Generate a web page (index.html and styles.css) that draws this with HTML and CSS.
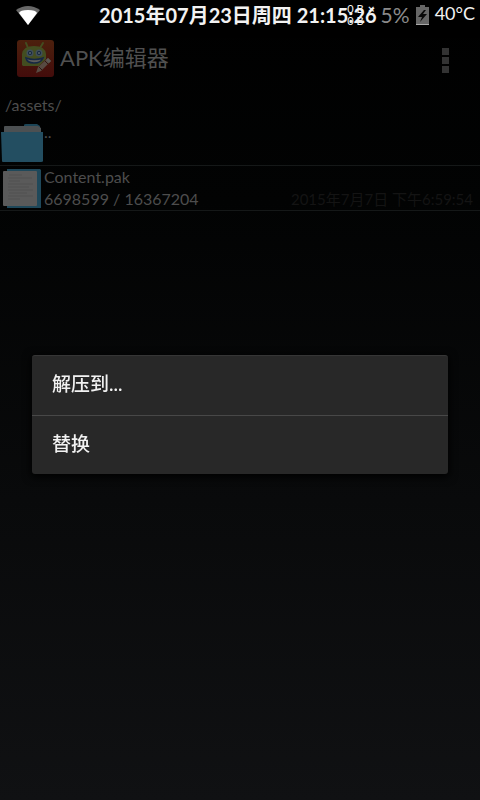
FILE: index.html
```
<!DOCTYPE html>
<html lang="zh-CN">
<head>
<meta charset="utf-8">
<meta name="viewport" content="width=device-width, initial-scale=1">
<title>APK编辑器</title>
<link rel="stylesheet" href="styles.css">
</head>
<body>
<header class="status">
  <svg class="wifi" viewBox="0 0 24 19" width="24" height="19" aria-hidden="true">
    <path d="M0 4Q12 -4 24 4L12 19Z" fill="#686868"/>
    <path d="M3 7Q4 4 12 4T21 7L12 19Z" fill="#fff"/>
  </svg>
  <time class="clock">2015年07月23日周四 21:15:26<span class="speed"><span>0 B</span><span>0 B</span></span><span class="mark">×</span></time>
  <span class="percent">5%</span>
  <svg class="battery" viewBox="0 0 13 20" width="13" height="20" aria-hidden="true">
    <path d="M4 0H9V2H13V20H0V2H4Z" fill="#666"/>
    <path d="M0 19H13V20H0Z" fill="#aaa"/>
    <path d="M8 5L2 12H6L4 17L11 9H7L10 5Z" fill="#080808"/>
  </svg>
  <span class="temp">40°C</span>
</header>
<main class="app">
  <div class="bar">
    <svg class="logo" viewBox="0 0 38 38" width="38" height="38" aria-hidden="true">
      <defs><linearGradient id="g" x1="0" y1="0" x2="0" y2="1"><stop offset="0" stop-color="#4c200d"/><stop offset="1" stop-color="#430c0b"/></linearGradient></defs>
      <rect x="1" y="1" width="37" height="37" rx="3" fill="url(#g)"/>
      <path d="M10 4L12 9M27 4L24 9" stroke="#434d20" stroke-width="2" stroke-linecap="round"/>
      <path d="M6 26V15Q7 7 18 7T30 15V20L23 27H7Z" fill="#434d20"/>
      <circle cx="14" cy="14" r="3.5" fill="#3f4d58"/><circle cx="23" cy="14" r="3.5" fill="#3f4d58"/>
      <circle cx="14" cy="14" r="2" fill="#12243d"/><circle cx="23" cy="14" r="2" fill="#12243d"/>
      <circle cx="14" cy="14" r="1" fill="#5c6468"/><circle cx="23" cy="14" r="1" fill="#5c6468"/>
      <path d="M10 19Q18 22 27 19Q25 24 18 24T10 19Z" fill="#5c5c5c" stroke="#152744" stroke-width="1.5"/>
      <path d="M20 34L22 28L32 19L35 22L25 32Z" fill="#574a42"/>
      <path d="M29 22L32 25M23 28L26 31" stroke="#2d1713"/>
      <path d="M32 19L35 22L33 24L30 21Z" fill="#5c5855"/>
    </svg>
    <h1 class="title">APK编辑器</h1>
    <button class="more" aria-label="更多选项"><svg viewBox="0 0 7 25" width="7" height="25" aria-hidden="true"><path d="M0 0H7V7H0ZM0 9H7V16H0ZM0 18H7V25H0Z" fill="#333"/></svg></button>
  </div>
  <p class="path">/assets/</p>
  <ul class="files">
    <li class="file">
      <svg class="icon" viewBox="0 0 44 44" width="44" height="44" aria-hidden="true">
        <path d="M24 4Q24 3 26 3H37L40 5V20H24Z" fill="#1c4557"/>
        <path d="M4 6Q4 5 5 5H38L41 7V14H4Z" fill="#4c5052"/>
        <path d="M1 11H43V40Q43 41 41 41H3Q2 41 2 40Z" fill="#234e61"/>
      </svg>
      <div class="info"><span>..</span></div>
    </li>
    <li class="file">
      <svg class="icon" viewBox="0 0 44 44" width="44" height="44" aria-hidden="true">
        <path d="M7 3H40L41 4V42H7Z" fill="#1f485a"/>
        <rect x="3" y="5" width="34" height="35" rx="1" fill="#5a5a5a"/>
        <path d="M9 9H22M8 12H32M9 15H20M8 18H33M8 21H29M8 24H33M9 27H27M8 30H33M8 33H20" stroke="#505050"/>
      </svg>
      <div class="info">
        <span>Content.pak</span>
        <div class="meta"><span>6698599 / 16367204</span><time class="date">2015年7月7日 下午6:59:54</time></div>
      </div>
    </li>
  </ul>
</main>
<div class="overlay">
  <div class="menu" role="dialog" aria-label="文件操作">
    <button class="item">解压到...</button>
    <button class="item">替换</button>
  </div>
</div>
</body>
</html>
```
FILE: styles.css
```
* { box-sizing: border-box; }
body {
  margin: 0;
  min-height: 100vh;
  background: linear-gradient(#000, #020303 25%, #101113);
  color: #4d4d4d;
  font-family: Lato, "Noto Sans CJK SC", sans-serif;
  font-size: 16px;
  line-height: 22px;
}
svg { display: block; flex: none; }
button { border: 0; background: none; color: inherit; font: inherit; }
.status {
  display: flex;
  align-items: flex-start;
  height: 38px;
  padding: 3px 5px 0 16px;
  background: #000;
  white-space: nowrap;
}
.wifi { margin-top: 3px; }
.clock {
  position: relative;
  margin-left: auto;
  color: #f2f2f2;
  font-size: 20px;
  font-weight: 700;
  line-height: 24px;
}
.speed {
  position: absolute;
  top: 0;
  right: 13px;
  font-size: 11px;
  font-weight: 400;
  line-height: 12px;
}
.speed span { display: block; }
.mark { position: absolute; top: -6px; right: 2px; font-size: 12px; }
.percent { margin-left: 4px; color: #8a8a8a; font-size: 21px; line-height: 24px; }
.battery { margin: 2px 6px 0; }
.temp { color: #f2f2f2; font-size: 18px; line-height: 20px; }
.bar {
  display: flex;
  align-items: center;
  height: 56px;
  padding: 0 31px 16px 16px;
}
.title {
  flex: 1;
  margin: 0 0 0 6px;
  color: #505050;
  font-size: 22px;
  font-weight: 400;
  line-height: 32px;
}
.more { padding: 4px 0 0; }
.path { margin: 0; padding: 0 5px; line-height: 22px; }
.files { margin: 0; padding: 5px 0 0; list-style: none; }
.file {
  display: flex;
  min-height: 45px;
  border-bottom: 1px solid #151818;
}
.info { flex: 1; padding-right: 7px; }
.info > span { display: block; }
.meta { display: flex; justify-content: space-between; }
.date { color: #141414; font-size: 15px; }
.overlay {
  position: fixed;
  inset: 0;
  display: flex;
  align-items: center;
  padding: 29px 32px 0;
}
.menu {
  flex: 1;
  border-top: 1px solid #363636;
  border-radius: 3px;
  background: #282828;
  box-shadow: 0 2px 8px 1px #000;
}
.item {
  display: block;
  width: 100%;
  height: 59px;
  padding: 0 20px 3px;
  color: #f2f2f2;
  font-size: 19px;
  font-weight: 500;
  text-align: left;
}
.item + .item { border-top: 1px solid #484848; }
```
